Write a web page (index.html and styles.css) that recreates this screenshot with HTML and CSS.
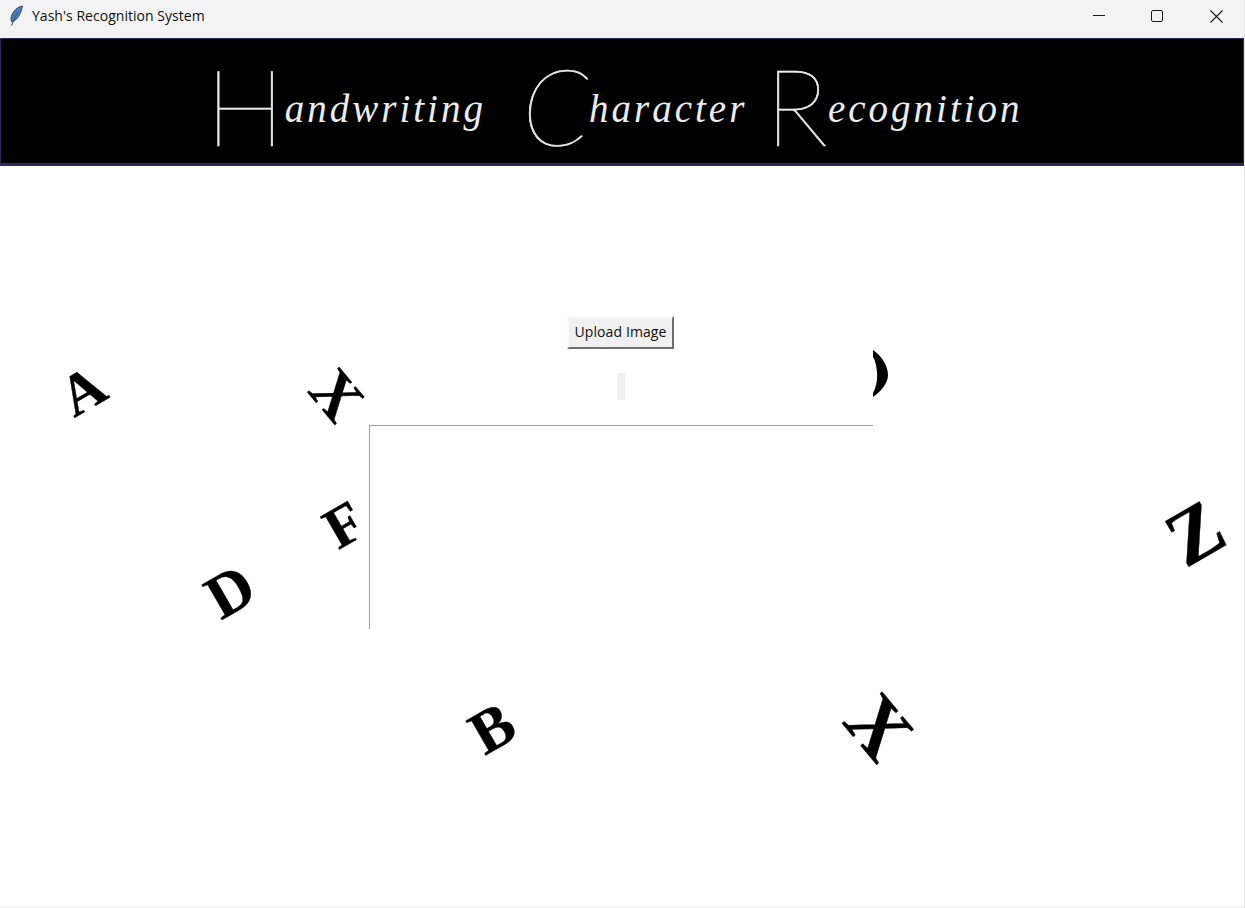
FILE: index.html
```html
<!DOCTYPE html>
<html lang="en">
<head>
<meta charset="utf-8">
<title>Yash's Recognition System</title>
<link rel="stylesheet" href="styles.css">
</head>
<body>
<div class="window">
  <div class="titlebar">
    <svg class="app-icon" width="16" height="22" viewBox="0 0 16 22">
      <path d="M14.5 1 C9.5 1.5 4.5 6.5 3.2 12 C2.7 14.5 3.2 16 4 17 C9 15.5 13 9 14.5 1 Z" fill="#4a7cc4" stroke="#20304f" stroke-width="0.8"/>
      <path d="M10 7 C7.5 10.5 5.5 14.5 3.5 20.5" fill="none" stroke="#4b5565" stroke-width="1.1"/>
    </svg>
    <span class="window-title">Yash's Recognition System</span>
    <div class="controls">
      <svg class="control" width="58" height="32" viewBox="0 0 58 32"><path d="M22 15.5 H34" stroke="#1a1a1a" stroke-width="1"/></svg>
      <svg class="control" width="58" height="32" viewBox="0 0 58 32"><rect x="22.5" y="10.5" width="11" height="11" rx="1.5" fill="none" stroke="#1a1a1a" stroke-width="1"/></svg>
      <svg class="control" width="58" height="32" viewBox="0 0 58 32"><path d="M23.5 10.5 L35.5 22.5 M35.5 10.5 L23.5 22.5" stroke="#1a1a1a" stroke-width="1.1"/></svg>
    </div>
  </div>
  <header class="banner">
    <h1 class="banner-text"><span class="cap cap-h">H</span><span class="word">andwriting</span><span class="cap cap-c">C</span><span class="word word-mid">haracter</span><span class="cap cap-r">R</span><span class="word">ecognition</span></h1>
  </header>
  <main class="stage">
    <span class="glyph glyph-a">A</span>
    <span class="glyph glyph-x1">X</span>
    <span class="glyph glyph-f">F</span>
    <span class="glyph glyph-d">D</span>
    <span class="glyph glyph-b">B</span>
    <span class="glyph glyph-x2">X</span>
    <span class="glyph glyph-z">Z</span>
    <svg class="fragment" width="16" height="48" viewBox="0 0 16 48">
      <path d="M0 0 C9 6 15 16 15 25 C15 34 7 42 0 47 L0 43 C4 36 5 26 3.5 18 C2.8 13 1.5 9 0 7 Z" fill="#000"/>
    </svg>
    <button class="upload" type="button">Upload Image</button>
    <div class="result-label"></div>
    <div class="preview"></div>
  </main>
</div>
</body>
</html>
```

FILE: styles.css
```css
* { box-sizing: border-box; }
html, body { margin: 0; padding: 0; height: 100%; background: #fff; overflow: hidden; }
.window { width: 1245px; height: 908px; display: flex; flex-direction: column; border-right: 1px solid #e6e6e6; border-bottom: 1px solid #ededed; }
.titlebar { height: 38px; flex: none; background: #f3f3f3; display: flex; align-items: center; padding-left: 8px; font-family: "Open Sans", "Noto Sans", sans-serif; font-size: 14px; color: #111; }
.app-icon { margin-top: -7px; }
.window-title { margin-left: 8px; margin-top: -7px; letter-spacing: 0.03px; }
.controls { margin-left: auto; display: flex; margin-top: -6px; margin-right: -1px; }
.banner { height: 128px; flex: none; background: #000; border: 1px solid #2a2c5c; border-bottom-width: 3px; padding-right: 16px; display: flex; align-items: center; justify-content: center; }
.banner-text { margin: 0; display: flex; align-items: center; font-weight: 400; color: #ececec; font-family: "Liberation Serif", serif; font-style: italic; white-space: nowrap; }
.word { font-size: 39px; letter-spacing: 3px; line-height: 1; margin-top: 14px; }
.word-mid { margin-right: 18px; }
.cap { font-family: Lato, "Liberation Sans", sans-serif; font-weight: 100; font-size: 106px; line-height: 1; -webkit-text-stroke: 0.7px #ececec; margin-top: 8px; }
.cap-h { font-style: normal; }
.cap-c { margin-left: 36px; }
.cap-r { font-style: normal; }
.stage { position: relative; flex: 1; display: flex; flex-direction: column; align-items: center; padding: 150px 2px 0 0; }
.upload { width: 107px; height: 33px; margin-right: 1px; padding: 0 0 2px; background: #f0f0f0; border: 2px solid; border-color: #fbfbfb #6f6f6f #6f6f6f #fbfbfb; font-family: "Open Sans", "Noto Sans", sans-serif; font-size: 14px; letter-spacing: 0.1px; color: #111; }
.result-label { width: 8px; height: 27px; margin-top: 24px; background: #f0f0f0; }
.preview { width: 504px; height: 204px; margin-top: 25px; border-top: 1px solid #a0a0a0; border-left: 1px solid #a0a0a0; }
.glyph { position: absolute; font-family: "Liberation Serif", serif; font-weight: 700; color: #000; line-height: 1; -webkit-text-stroke: 0.4px #000; transform: translate(-50%, -50%) rotate(-30deg); }
.glyph-a { left: 83px; top: 225px; font-size: 58px; }
.glyph-x1 { left: 337px; top: 229px; font-size: 62px; transform: translate(-50%, -50%) rotate(50deg); }
.glyph-f { left: 344px; top: 359px; font-size: 58px; }
.glyph-d { left: 230px; top: 425px; font-size: 62px; }
.glyph-b { left: 492px; top: 562px; font-size: 61px; }
.glyph-x2 { left: 879px; top: 561px; font-size: 78px; transform: translate(-50%, -50%) rotate(50deg); }
.glyph-z { left: 1195px; top: 367px; font-size: 78px; }
.fragment { position: absolute; left: 873px; top: 184px; }
```
